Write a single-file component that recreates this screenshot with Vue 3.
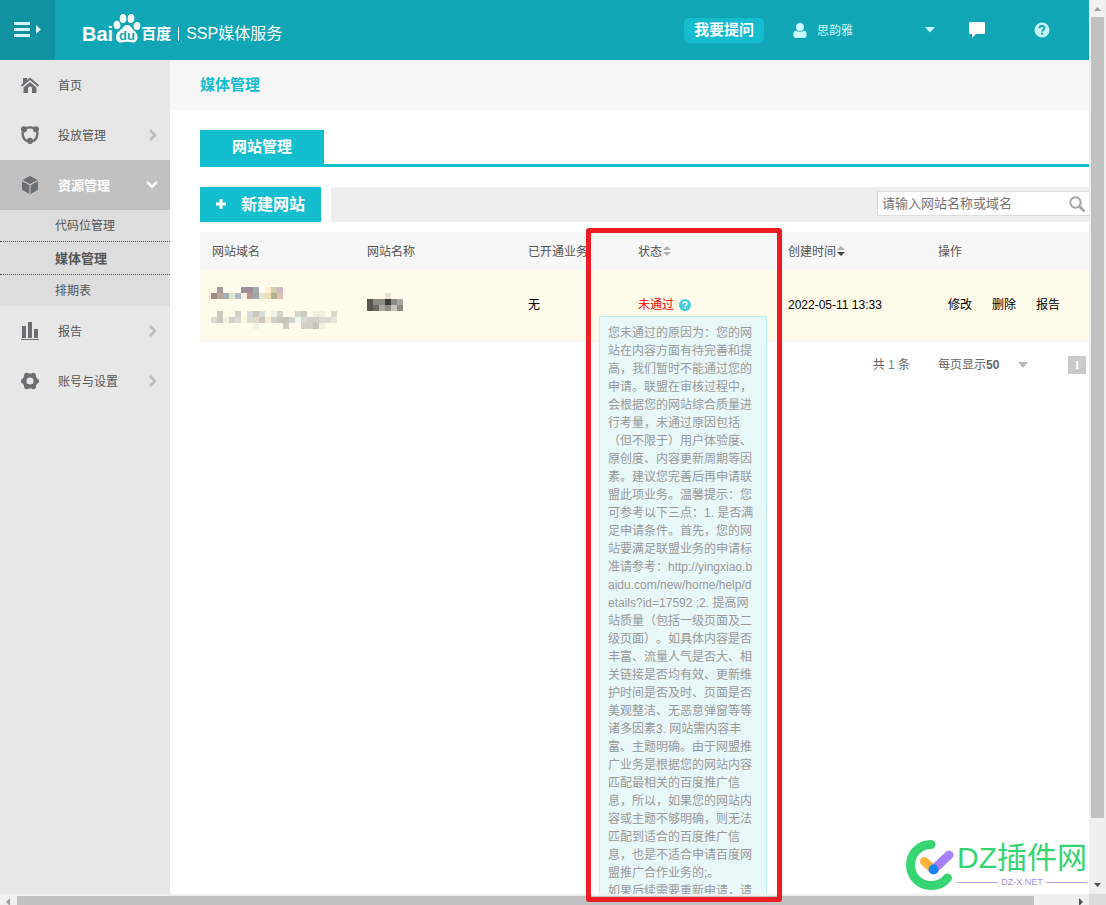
<script setup>
import { ref } from 'vue'

const keyword = ref('')
const pageSize = ref('50')

const reason =
  '您未通过的原因为：您的网站在内容方面有待完善和提高，我们暂时不能通过您的申请。联盟在审核过程中，会根据您的网站综合质量进行考量，未通过原因包括（但不限于）用户体验度、原创度、内容更新周期等因素。建议您完善后再申请联盟此项业务。温馨提示：您可参考以下三点：1. 是否满足申请条件。首先，您的网站要满足联盟业务的申请标准请参考：http://yingxiao.baidu.com/new/home/help/details?id=17592 ;2. 提高网站质量（包括一级页面及二级页面）。如具体内容是否丰富、流量人气是否大、相关链接是否均有效、更新维护时间是否及时、页面是否美观整洁、无恶意弹窗等等诸多因素3. 网站需内容丰富、主题明确。由于网盟推广业务是根据您的网站内容匹配最相关的百度推广信息，所以，如果您的网站内容或主题不够明确，则无法匹配到适合的百度推广信息，也是不适合申请百度网盟推广合作业务的;。'
const reasonMore = '如果后续需要重新申请，请'

// Censored values: one row of colours per line of blocks, "-" leaves a gap.
const toCells = (rows) =>
  rows.flatMap((row, y) =>
    row.split(' ').map((c, x) => ({ x: x * 6, y: y * 6, fill: '#' + c })).filter((c) => c.fill !== '#-')
  )
const domainCells = toCells([
  '- a89c98 - - - a09098 a09098 9fb0ac - ffedd0 d2ccaa d0bcc0',
  'a09088 b8a898 a0b0a8 dde4d4 b4b8c4 f8f0dc b89098 9ca4a4 e4e4d0 f0dcb4 b4b090 dcc4b8'
])
const urlCells = toCells([
  '- ccc8c0 - - d4d0c4 - d8dcd8 ccc8bc d8dcd8 - f2f0e4 d4d4c8 - fffae0 d4d8d4 ccccc4 - f2efe0 f2efe0 - dcdacf',
  'dcdccf ccc8c0 f0eedc d0cec6 d8dcd4 fdf6e0 dcdccf e0d8cc ccc8c0 f6edd4 d0d0cc ccc8bc ccc4b8 d0d4d4 f0f8ec dcd8cf d0d0c8 d0cec6 dcd8cf dcd8cf e8e4d8',
  '- - - - - - - f2f2e6 - - - - d0ccc4 - - d4d0c8 d4d0c8 c4c4bc f2efe4'
])
const nameCells = toCells([
  '- - - e4e0d4',
  '585850 8c8c84 8c8c84 3c3c38 8c8c84 a8a8a0',
  '585850 6c6c64 a8a8a0 8c8c84 c8c4b8 8c8c84'
])
</script>

<template>
  <div class="window">
    <div class="page">
      <header class="top">
        <button class="toggle" aria-label="菜单">
          <svg width="28" height="16" viewBox="0 0 28 16">
            <path d="M0 0h16v3H0zM0 6h16v3H0zM0 12h16v3H0zM22 3l5 4.500-5 4.500z" fill="#d8f6f9" />
          </svg>
        </button>
        <a class="brand" href="#">
          <span class="bai">Bai</span>
          <svg class="paw" width="28" height="32" viewBox="0 0 28 32">
            <g fill="#fff">
              <ellipse cx="4" cy="13" rx="3.300" ry="4.200" transform="rotate(-12 4 13)" />
              <ellipse cx="10" cy="6.500" rx="3.300" ry="4.500" />
              <ellipse cx="18" cy="6.500" rx="3.300" ry="4.500" transform="rotate(8 18 6.500)" />
              <ellipse cx="24" cy="14" rx="3.300" ry="4" transform="rotate(12 24 14)" />
              <path d="M14 13c3 0 4 2 6 4.500 2 2 4.500 4 4.500 7.500 0 3.500-2 5.500-5 5.500-2 0-3.500-.700-5.500-.700s-3.500.700-5.500.700c-3.500 0-5.500-2-5.500-5.500S5.500 19.500 8 17.500c2.500-2 3-4.500 6-4.500z" />
            </g>
            <text x="14" y="28" text-anchor="middle" class="du">du</text>
          </svg>
          <span class="baidu">百度</span>
          <span class="product">SSP媒体服务</span>
        </a>
        <button class="ask">我要提问</button>
        <button class="user">
          <svg width="14" height="15" viewBox="0 0 14 15" fill="#c8f8fb">
            <circle cx="7" cy="4" r="4" />
            <path d="M3 7.500c2 1.600 6 1.600 8 0 2 .500 2.700 2 2.700 4.500 0 2-1 3-3 3H3.300c-2 0-3-1-3-3C.300 9.500 1 8 3 7.500z" />
          </svg>
          <span>思韵雅</span>
          <svg class="caret" width="10" height="6" viewBox="0 0 10 6"><path d="M0 0h10L5 5.500z" fill="#c8f8fb" /></svg>
        </button>
        <button class="chat" aria-label="消息">
          <svg width="16" height="16" viewBox="0 0 16 16"><path d="M1 0h14q1 0 1 1v10q0 1-1 1H7l-4 4v-4H1q-1 0-1-1V1q0-1 1-1z" fill="#fff" /></svg>
        </button>
        <button class="help" aria-label="帮助">
          <svg width="16" height="16" viewBox="0 0 16 16">
            <circle cx="8" cy="8" r="7.500" fill="#c8f8fb" />
            <path d="M5.500 6.200C5.600 3.200 10.600 3.300 10.500 6c0 1.700-2.300 1.700-2.300 3.500M8.200 10.800v2" fill="none" stroke="#10a6b5" stroke-width="2" />
          </svg>
        </button>
      </header>

      <div class="body">
        <nav class="side">
          <a class="item" href="#">
            <svg width="18" height="18" viewBox="0 0 18 18" fill="#6b6f72">
              <path d="M2 2h4v2.500L2 8z" />
              <path d="M.500 10L9 2.800 17.500 10" fill="none" stroke="#6b6f72" stroke-width="2" />
              <path d="M9 6l6.500 5.500V17H11v-4.500a2 2 0 0 0-4 0V17H2.500v-5.500z" />
            </svg>
            <span>首页</span>
          </a>
          <a class="item" href="#">
            <svg width="18" height="18" viewBox="0 0 18 18">
              <g fill="none" stroke="#6b6f72" stroke-width="2.400">
                <path d="M5 2.200q4-1.600 8 0M1.600 6Q1.200 12.500 6 15.200M16.400 6q.400 6.500-4.400 9.200" />
              </g>
              <g fill="#6b6f72"><circle cx="3" cy="3.300" r="3.100" /><circle cx="15" cy="3.300" r="3.100" /><circle cx="9" cy="14.800" r="3.100" /></g>
            </svg>
            <span>投放管理</span>
            <svg class="arrow" width="8" height="12" viewBox="0 0 8 12"><path d="M1 1l5 5-5 5" fill="none" stroke="#bdbdbd" stroke-width="2.500" /></svg>
          </a>
          <a class="item open" href="#">
            <svg width="18" height="18" viewBox="0 0 18 18" fill="#6b6f72">
              <path d="M9 0l7.500 4L9 8 1.500 4zM1 5.300l7.400 4V18L1 13.800zM17 5.300l-7.400 4V18l7.400-4.200z" />
            </svg>
            <span>资源管理</span>
            <svg class="arrow" width="12" height="8" viewBox="0 0 12 8"><path d="M1 1l5 5 5-5" fill="none" stroke="#fff" stroke-width="2.500" /></svg>
          </a>
          <div class="sub">
            <a href="#">代码位管理</a>
            <a href="#" class="current">媒体管理</a>
            <a href="#">排期表</a>
          </div>
          <a class="item" href="#">
            <svg width="18" height="18" viewBox="0 0 18 18" fill="#6b6f72"><path d="M1 4h4v12H1zM7 0h4v16H7zM13 7h4v9h-4zM0 17h18v1H0z" /></svg>
            <span>报告</span>
            <svg class="arrow" width="8" height="12" viewBox="0 0 8 12"><path d="M1 1l5 5-5 5" fill="none" stroke="#bdbdbd" stroke-width="2.500" /></svg>
          </a>
          <a class="item" href="#">
            <svg width="18" height="18" viewBox="0 0 18 18">
              <circle cx="9" cy="9" r="5.600" fill="none" stroke="#6b6f72" stroke-width="4" />
              <g fill="#6b6f72">
                <circle cx="2.600" cy="9" r="2.600" /><circle cx="15.400" cy="9" r="2.600" />
                <circle cx="5.700" cy="3.400" r="2.600" /><circle cx="12.300" cy="3.400" r="2.600" />
                <circle cx="5.700" cy="14.600" r="2.600" /><circle cx="12.300" cy="14.600" r="2.600" />
              </g>
            </svg>
            <span>账号与设置</span>
            <svg class="arrow" width="8" height="12" viewBox="0 0 8 12"><path d="M1 1l5 5-5 5" fill="none" stroke="#bdbdbd" stroke-width="2.500" /></svg>
          </a>
        </nav>

        <main class="main">
          <h1 class="title">媒体管理</h1>
          <div class="content">
            <div class="tabs"><button class="tab">网站管理</button></div>

            <div class="tools">
              <button class="create">
                <svg width="12" height="12" viewBox="0 0 12 12"><path d="M4.500 0h3v3.500H11v3H7.500V10h-3V6.500H1v-3h3.500z" fill="#fff" /></svg>
                <span>新建网站</span>
              </button>
              <div class="bar">
                <div class="search">
                  <input v-model="keyword" type="text" placeholder="请输入网站名称或域名" aria-label="请输入网站名称或域名" />
                  <button aria-label="搜索">
                    <svg width="16" height="16" viewBox="0 0 16 16" fill="none" stroke="#a8a8a8">
                      <circle cx="6.500" cy="6.500" r="5.200" stroke-width="2" />
                      <path d="M10.500 10.500l4 4" stroke-width="3" stroke-linecap="round" />
                    </svg>
                  </button>
                </div>
              </div>
            </div>

            <table class="sites">
              <colgroup>
                <col class="c-domain" /><col class="c-name" /><col class="c-biz" /><col class="c-state" /><col class="c-time" /><col />
              </colgroup>
              <thead>
                <tr>
                  <th>网站域名</th>
                  <th>网站名称</th>
                  <th>已开通业务</th>
                  <th>状态<svg class="sort" width="8" height="10" viewBox="0 0 8 10"><path d="M0 4l4-4 4 4zM0 6h8l-4 4z" fill="#b0b0b0" /></svg></th>
                  <th>创建时间<svg class="sort" width="8" height="10" viewBox="0 0 8 10"><path d="M0 4l4-4 4 4z" fill="#b0b0b0" /><path d="M0 6h8l-4 4z" fill="#444" /></svg></th>
                  <th>操作</th>
                </tr>
              </thead>
              <tbody>
                <tr>
                  <td class="masked">
                    <svg class="mosaic" width="72" height="12"><rect v-for="(c, i) in domainCells" :key="i" :x="c.x" :y="c.y" width="6" height="6" :fill="c.fill" /></svg>
                    <svg class="mosaic url" width="126" height="18"><rect v-for="(c, i) in urlCells" :key="i" :x="c.x" :y="c.y" width="6" height="6" :fill="c.fill" /></svg>
                  </td>
                  <td><svg class="mosaic name" width="36" height="18"><rect v-for="(c, i) in nameCells" :key="i" :x="c.x" :y="c.y" width="6" height="6" :fill="c.fill" /></svg></td>
                  <td>无</td>
                  <td class="state">
                    <span class="failed">未通过</span>
                    <svg class="why" width="12" height="12" viewBox="0 0 12 12">
                      <circle cx="6" cy="6" r="6" fill="#45cbd9" />
                      <path d="M4 4.700c0-2.300 4-2.300 4 0 0 1.300-1.900 1.300-1.900 2.600M6.100 8.300v1.500" fill="none" stroke="#fff" stroke-width="1.500" />
                    </svg>
                    <div class="tip" role="tooltip">{{ reason }}<br />{{ reasonMore }}</div>
                  </td>
                  <td>2022-05-11 13:33</td>
                  <td><div class="ops"><a href="#">修改</a><a href="#">删除</a><a href="#">报告</a></div></td>
                </tr>
              </tbody>
            </table>

            <div class="pager">
              <span>共 <b>1</b> 条</span>
              <label class="size">每页显示<select v-model="pageSize"><option>50</option></select>
                <svg width="10" height="6" viewBox="0 0 10 6"><path d="M0 0h10L5 6z" fill="#b8b8b8" /></svg>
              </label>
              <button class="num">1</button>
            </div>
          </div>
        </main>
      </div>
    </div>

    <div class="vbar">
      <svg width="7" height="4" viewBox="0 0 7 4"><path d="M0 4L3.500 0 7 4z" fill="#a0a0a0" /></svg>
      <div class="vthumb"></div>
      <svg width="7" height="4" viewBox="0 0 7 4"><path d="M0 0h7L3.500 4z" fill="#505050" /></svg>
    </div>
    <div class="hbar">
      <svg width="4" height="8" viewBox="0 0 4 8"><path d="M4 0v8L0 4z" fill="#a0a0a0" /></svg>
      <div class="hthumb"></div>
      <svg width="4" height="8" viewBox="0 0 4 8"><path d="M0 0v8l4-4z" fill="#505050" /></svg>
    </div>
    <div class="corner"></div>

    <div class="mark"></div>

    <div class="watermark">
      <svg width="50" height="50" viewBox="0 0 50 50" fill="none" stroke-linecap="round">
        <path d="M25 4.500C13 4.500 4.500 14 4.500 25S13 45.500 25 45.500c7 0 13-3 16.500-7.500" stroke="#36d572" stroke-width="9" />
        <path d="M18.500 21.500l9 8" stroke="#ffb53c" stroke-width="9" />
        <path d="M27.500 29.500L43 15" stroke="#a682ff" stroke-width="9" />
        <circle cx="27.500" cy="29.500" r="5" fill="#1684fc" />
      </svg>
      <div class="wm-text">
        <span class="wm-name">DZ插件网</span>
        <span class="wm-site">DZ-X.NET</span>
      </div>
    </div>
  </div>
</template>

<style>
body {
  margin: 0;
  background: #fff;
}
</style>

<style scoped>
.window {
  position: relative;
  display: grid;
  grid-template-columns: minmax(0, 1fr) 17px;
  grid-template-rows: minmax(0, 1fr) 11px;
  height: 100vh;
  overflow: hidden;
  font: 12px/18px "Liberation Sans", "Noto Sans CJK SC", sans-serif;
  color: #555;
}
.window * {
  box-sizing: border-box;
}
svg {
  display: block;
  flex: none;
}
a {
  color: inherit;
  text-decoration: none;
}
button,
input,
select {
  margin: 0;
  padding: 0;
  border: 0;
  background: none;
  font: inherit;
  color: inherit;
}
.page {
  display: flex;
  flex-direction: column;
  overflow: hidden;
}
.top {
  display: flex;
  align-items: center;
  flex: none;
  height: 60px;
  padding-right: 39px;
  background: #10a6b5;
  color: #c8f8fb;
}
.toggle {
  align-self: stretch;
  width: 55px;
  padding-left: 14px;
  background: #1192a0;
}
.brand {
  display: flex;
  align-items: center;
  height: 60px;
  margin-left: 27px;
  padding-top: 8px;
  color: #fff;
  white-space: nowrap;
}
.bai {
  font-size: 20px;
  font-weight: bold;
}
.paw {
  margin: 0 0 12px;
}
.du {
  font: bold 13px "Liberation Sans", sans-serif;
  fill: #10a6b5;
}
.baidu {
  font-size: 15px;
  font-weight: bold;
}
.product {
  margin-left: 7px;
  padding-left: 7px;
  border-left: 1px solid #fff;
  font-size: 16px;
  line-height: 14px;
}
.ask {
  width: 80px;
  height: 25px;
  margin-left: auto;
  border-radius: 5px;
  background: #14bccd;
  color: #fff;
  font-size: 15px;
  font-weight: bold;
}
.user {
  display: flex;
  align-items: center;
  width: 142px;
  margin-left: 29px;
}
.user span {
  margin-left: 10px;
  padding-top: 2px;
}
.caret {
  margin-left: auto;
}
.chat {
  margin-left: 34px;
}
.help {
  margin-left: 49px;
}
.body {
  display: flex;
  flex: 1;
  min-height: 0;
}
.side {
  flex: none;
  width: 170px;
  background: #e7e7e7;
}
.item {
  display: flex;
  align-items: center;
  height: 50px;
  padding: 0 13px 0 21px;
}
.item span {
  padding-top: 2px;
  margin-left: 19px;
}
.arrow {
  margin-left: auto;
}
.open {
  padding-right: 12px;
  background: #c1c1c1;
  color: #fff;
  font-size: 13px;
  font-weight: bold;
}
.sub {
  background: #ddd;
}
.sub a {
  display: block;
  height: 31px;
  padding-left: 55px;
  line-height: 33px;
}
.sub .current {
  height: 34px;
  border: dotted #555;
  border-width: 1px 0;
  font-size: 13px;
  font-weight: bold;
}
.main {
  flex: 1;
  min-width: 0;
}
.title {
  margin: 0;
  padding-left: 30px;
  background: #f7f7f7;
  color: #14bccf;
  font-size: 15px;
  font-weight: bold;
  line-height: 50px;
}
.content {
  padding: 20px 0 0 30px;
}
.tabs {
  height: 37px;
  border-bottom: 3px solid #13becf;
}
.tab {
  width: 124px;
  height: 34px;
  background: #13becf;
  color: #fff;
  font-size: 15px;
  font-weight: bold;
}
.tools {
  display: flex;
  gap: 10px;
  height: 35px;
  margin: 20px 0 10px;
}
.create {
  display: flex;
  align-items: center;
  gap: 14px;
  width: 121px;
  padding-left: 15px;
  background: #13becf;
  color: #fff;
  font-size: 16px;
  font-weight: bold;
}
.bar {
  display: flex;
  flex: 1;
  align-items: center;
  justify-content: flex-end;
  padding-bottom: 2px;
  background: #eee;
}
.search {
  display: flex;
  align-items: center;
  width: 212px;
  height: 25px;
  padding: 0 4px;
  border: 1px solid #ddd;
  border-right: 0;
  background: #fff;
}
.search input {
  flex: 1;
  min-width: 0;
  font-size: 13px;
}
.search input::placeholder {
  color: #757575;
}
.sites {
  width: 100%;
  border-spacing: 0;
  table-layout: fixed;
}
.c-domain {
  width: 155px;
}
.c-name {
  width: 161px;
}
.c-biz {
  width: 110px;
}
.c-state,
.c-time {
  width: 150px;
}
.sites th {
  height: 38px;
  padding: 2px 0 0 12px;
  background: #f7f7f7;
  font-weight: normal;
  text-align: left;
  white-space: nowrap;
}
.sites td {
  height: 71px;
  padding: 0 0 0 12px;
  border-bottom: 1px solid #eee;
  background: #fffbeb;
  color: #000;
  white-space: nowrap;
}
.sites .masked {
  padding-top: 6px;
}
.sort {
  display: inline-block;
  margin-left: 1px;
}
.mosaic {
  margin-left: -1px;
}
.url {
  margin-top: 12px;
}
.name {
  margin: 0 0 6px;
}
.state {
  position: relative;
}
.failed {
  color: #f00;
}
.why {
  display: inline-block;
  margin-left: 5px;
  vertical-align: -2px;
}
.tip {
  position: absolute;
  top: 46px;
  left: -27px;
  width: 168px;
  padding: 7px 8px;
  border: 1px solid #c0f0f2;
  background: #e8f7f8;
  color: #999;
  white-space: normal;
  word-break: break-all;
  text-spacing-trim: space-all;
}
.ops {
  display: flex;
  gap: 20px;
  padding-left: 10px;
}
.pager {
  display: flex;
  align-items: center;
  justify-content: flex-end;
  gap: 28px;
  margin-top: 15px;
  padding-right: 3px;
  color: #666;
}
.pager b {
  color: #6a7f9c;
  font-weight: normal;
}
.size {
  display: flex;
  align-items: center;
  width: 90px;
}
.size select {
  appearance: none;
  font-weight: bold;
}
.size svg {
  margin-left: auto;
}
.num {
  width: 18px;
  height: 18px;
  margin-left: 12px;
  background: #c9c9c9;
  color: #fff;
  font-family: "Liberation Serif", serif;
  font-weight: bold;
}
.vbar {
  display: flex;
  flex-direction: column;
  align-items: center;
  justify-content: space-between;
  padding: 7px 2px;
  background: #f0f0f0;
}
.vthumb {
  flex: 1;
  width: 100%;
  margin: 6px 0 65px;
  background: #c1c1c1;
}
.hbar {
  display: flex;
  align-items: flex-start;
  padding: 2px 6px 0;
  background: #f0f0f0;
}
.hbar svg {
  margin-top: 2px;
}
.hthumb {
  flex: 1;
  height: 9px;
  margin: 0 45px 0 7px;
  background: #c1c1c1;
}
.corner {
  background: #dcdcdc;
}
.mark {
  position: absolute;
  top: 228px;
  bottom: 3px;
  left: 586px;
  width: 196px;
  border: 5px solid #ed1c24;
  border-radius: 3px;
}
.watermark {
  position: absolute;
  right: 19px;
  bottom: 15px;
  display: flex;
  gap: 1px;
}
.wm-text {
  display: flex;
  flex-direction: column;
}
.wm-name {
  color: #36d572;
  font-size: 30px;
  line-height: 36px;
}
.wm-site {
  display: flex;
  align-items: center;
  gap: 3px;
  color: #a98fe8;
  font-size: 9px;
  line-height: 12px;
}
.wm-site::before,
.wm-site::after {
  content: "";
  flex: 1;
  height: 1px;
  background: #b8a0f0;
}
</style>
